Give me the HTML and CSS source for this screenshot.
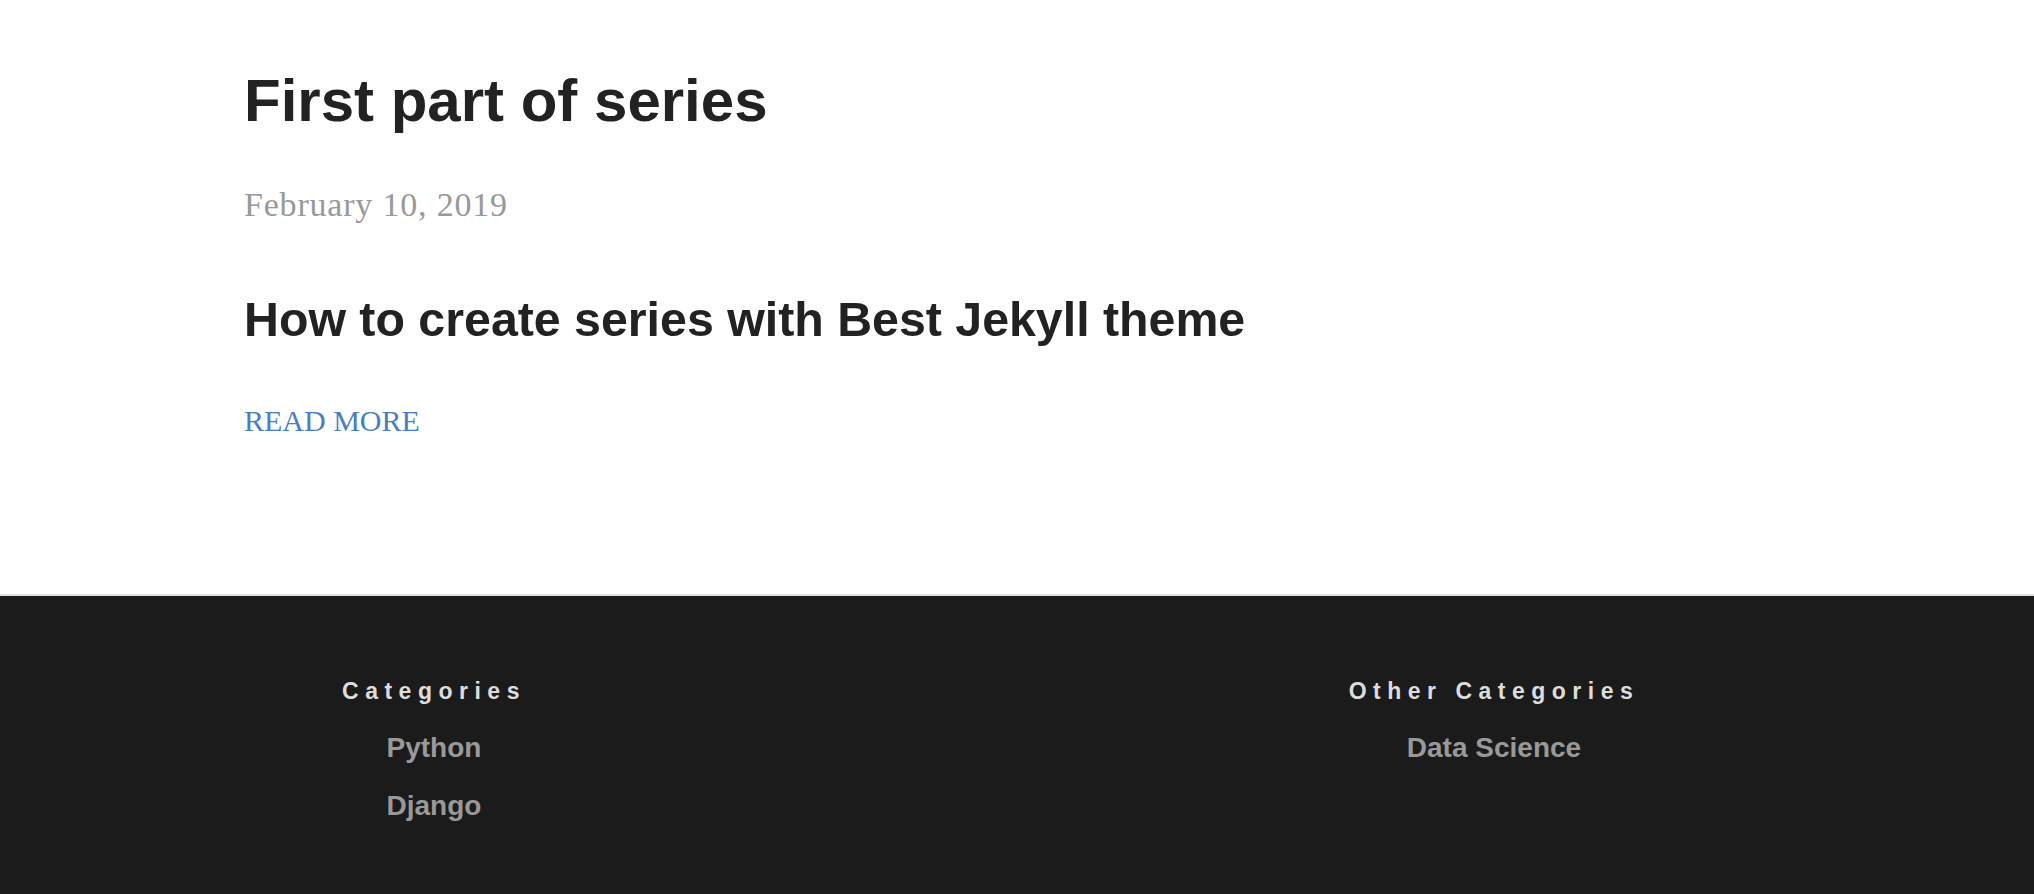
FILE: index.html
```html
<!DOCTYPE html>
<html lang="en">
<head>
<meta charset="utf-8">
<title>First part of series</title>
<link rel="stylesheet" href="styles.css">
</head>
<body>
<main class="post">
  <h1 class="post-title">First part of series</h1>
  <p class="post-date">February 10, 2019</p>
  <h2 class="post-subtitle">How to create series with Best Jekyll theme</h2>
  <a class="read-more" href="#">READ MORE</a>
</main>
<footer class="site-footer">
  <div class="footer-cols">
    <section class="footer-col">
      <h3 class="footer-heading">Categories</h3>
      <ul class="footer-list">
        <li><a href="#">Python</a></li>
        <li><a href="#">Django</a></li>
      </ul>
    </section>
    <section class="footer-col">
      <h3 class="footer-heading">Other Categories</h3>
      <ul class="footer-list">
        <li><a href="#">Data Science</a></li>
      </ul>
    </section>
  </div>
</footer>
</body>
</html>
```
FILE: styles.css
```css
html, body {
  margin: 0;
  padding: 0;
  background: #fff;
}

.post {
  padding: 65px 0 0 244px;
  height: 594px;
  box-sizing: border-box;
}

.post-title {
  margin: 0;
  font-family: "Liberation Sans", Arial, sans-serif;
  font-weight: 700;
  font-size: 60px;
  line-height: 72px;
  color: #222;
}

.post-date {
  margin: 48px 0 0;
  font-family: "Liberation Serif", "Times New Roman", serif;
  font-size: 34px;
  line-height: 40px;
  letter-spacing: 0.8px;
  color: #999;
}

.post-subtitle {
  margin: 65px 0 0;
  font-family: "Liberation Sans", Arial, sans-serif;
  font-weight: 700;
  font-size: 48.3px;
  line-height: 58px;
  color: #222;
}

.read-more {
  display: inline-block;
  margin-top: 55px;
  font-family: "Liberation Serif", "Times New Roman", serif;
  font-size: 30px;
  line-height: 36px;
  color: #4a7ec1;
  text-decoration: none;
}

.site-footer {
  border-top: 2px solid #e0e0e0;
  background: #1b1b1b;
  height: 300px;
  box-sizing: border-box;
  padding-top: 80px;
}

.footer-cols {
  display: grid;
  grid-template-columns: 380px 380px;
  column-gap: 680px;
  padding-left: 244px;
}

.footer-col {
  text-align: center;
}

.footer-heading {
  margin: 0;
  font-family: "Liberation Sans", Arial, sans-serif;
  font-weight: 700;
  font-size: 23px;
  line-height: 30px;
  letter-spacing: 6.5px;
  color: #ddd;
}

.footer-list {
  list-style: none;
  margin: 25px 0 0;
  padding: 0;
  display: flex;
  flex-direction: column;
  gap: 24px;
}

.footer-list li {
  font-family: "Liberation Sans", Arial, sans-serif;
  font-weight: 700;
  font-size: 28px;
  line-height: 34px;
}

.footer-list a {
  color: #999;
  text-decoration: none;
}
```
